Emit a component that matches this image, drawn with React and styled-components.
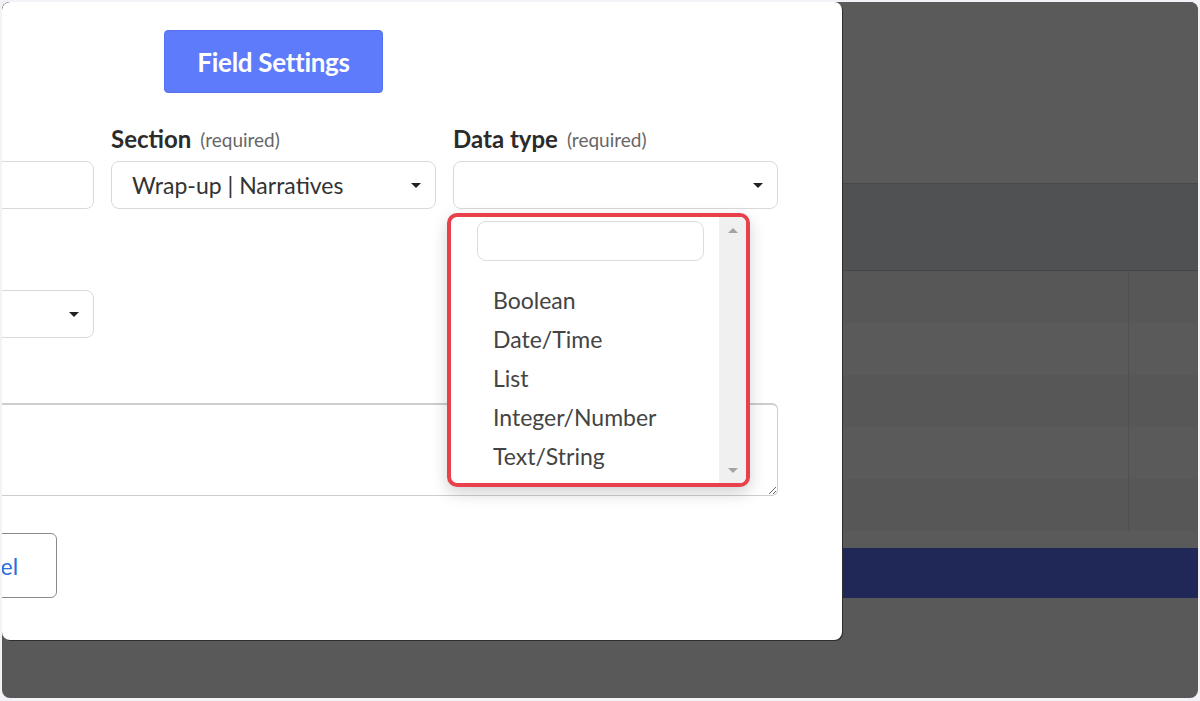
import React from 'react'
import styled, { createGlobalStyle } from 'styled-components'

const GlobalStyle = createGlobalStyle`
  html, body {
    margin: 0;
    padding: 0;
    background: #f2f2f7;
    font-family: Lato, "Open Sans", sans-serif;
  }
  #root {
    padding: 2px 2px 3px 2px;
  }
`

const Frame = styled.div`
  position: relative;
  height: 696px;
  border-radius: 8px;
  overflow: hidden;
  background: #595959;
`

const AppTop = styled.div`
  height: 181px;
  background: #5a5a5a;
`

const Toolbar = styled.div`
  height: 86px;
  background: #505152;
  border-top: 1px solid #474848;
  border-bottom: 1px solid #464646;
`

const Table = styled.div`
  display: flex;
  flex-direction: column;
`

const TableRow = styled.div`
  display: grid;
  grid-template-columns: 1127px 1fr;
  height: 52px;
  background: ${({ odd }) => (odd ? '#5a5a5a' : '#575757')};
`

const Cell = styled.div`
  border-right: ${({ ruled }) => (ruled ? '1px solid #505050' : 'none')};
`

const Spacer = styled.div`
  height: 17px;
  background: #5a5a5a;
`

const NavBar = styled.div`
  height: 50px;
  background: #202857;
`

const Modal = styled.div`
  position: absolute;
  left: 0;
  top: 0;
  width: 840px;
  height: 638px;
  background: #fff;
  border-radius: 8px;
  box-shadow: 1px 1px 0 #2e2e2e;
  overflow: hidden;
`

const Form = styled.div`
  width: 1009px;
  margin-left: -233px;
  padding-top: 28px;
`

const Header = styled.div`
  display: flex;
  justify-content: center;
`

const PrimaryButton = styled.button`
  width: 219px;
  height: 63px;
  border: 1px solid #5671f0;
  border-radius: 4px;
  background: #5e7bfb;
  color: #fff;
  font-family: Lato, sans-serif;
  font-weight: 700;
  font-size: 26px;
  letter-spacing: -0.3px;
`

const Row = styled.div`
  display: grid;
  grid-template-columns: repeat(3, 325px);
  column-gap: 17px;
  margin-top: ${({ top }) => top}px;
`

const Field = styled.div`
  position: relative;
  display: flex;
  flex-direction: column;
`

const Label = styled.div`
  height: 35px;
  display: flex;
  align-items: center;
  gap: 9px;
  margin-bottom: 5px;
  color: #2b2b2b;
  font-weight: 700;
  font-size: 24px;
`

const Hint = styled.span`
  color: #666;
  font-weight: 400;
  font-size: 19px;
  margin-top: 2px;
`

const Box = styled.div`
  position: relative;
  height: 46px;
  border: 1px solid #d9d9d9;
  border-radius: 8px;
  display: flex;
  align-items: center;
  padding: 0 20px;
  color: #333;
  font-size: 23px;
`

const Caret = styled.span`
  position: absolute;
  right: 14px;
  top: 50%;
  margin-top: -2px;
  border-left: 5px solid transparent;
  border-right: 5px solid transparent;
  border-top: 5px solid #222;
`

const TextArea = styled.textarea`
  display: block;
  box-sizing: border-box;
  width: 100%;
  height: 93px;
  margin-top: 65px;
  border: 1px solid #cdcdcd;
  border-top-width: 2px;
  border-radius: 6px;
  resize: vertical;
  font-family: Lato, sans-serif;
  outline: none;
`

const Actions = styled.div`
  display: flex;
  gap: 16px;
  margin-top: 37px;
  padding-left: 9px;
`

const ActionButton = styled.button`
  height: 65px;
  padding: 0 38px 0 34px;
  border-radius: 6px;
  font-family: Lato, sans-serif;
  font-size: 23px;
  background: ${({ primary }) => (primary ? '#5e7bfb' : '#fff')};
  color: ${({ primary }) => (primary ? '#fff' : '#2b6fd8')};
  border: 1px solid ${({ primary }) => (primary ? '#5671f0' : '#8a8a8a')};
`

const Dropdown = styled.div`
  position: absolute;
  left: -6px;
  top: calc(100% + 4px);
  width: 295px;
  height: 266px;
  border: 4px solid #e8414c;
  border-radius: 10px;
  background: #fff;
  box-shadow: 0 6px 16px rgba(0, 0, 0, 0.18);
  display: grid;
  grid-template-columns: 1fr 27px;
  overflow: hidden;
  z-index: 2;
`

const ListArea = styled.div`
  padding: 4px 0 0 26px;
`

const Search = styled.div`
  width: 225px;
  height: 38px;
  border: 1px solid #dcdcdc;
  border-radius: 9px;
`

const Options = styled.ul`
  list-style: none;
  margin: 20px 0 0;
  padding: 0 0 0 16px;
`

const Option = styled.li`
  height: 39px;
  line-height: 39px;
  color: #444;
  font-size: 23px;
`

const ScrollTrack = styled.div`
  background: #f0f0f0;
  display: flex;
  flex-direction: column;
  justify-content: space-between;
  align-items: center;
  padding: 11px 0 10px;
`

const Arrow = styled.span`
  border-left: 5px solid transparent;
  border-right: 5px solid transparent;
  ${({ up }) =>
    up ? 'border-bottom: 5px solid #a3a3a3;' : 'border-top: 5px solid #a3a3a3;'}
`

const dataTypes = ['Boolean', 'Date/Time', 'List', 'Integer/Number', 'Text/String']

export default function App() {
  return (
    <>
      <GlobalStyle />
      <Frame>
        <AppTop />
        <Toolbar />
        <Table>
          {[0, 1, 2, 3, 4].map((i) => (
            <TableRow key={i} odd={i % 2 === 1}>
              <Cell ruled />
              <Cell />
            </TableRow>
          ))}
        </Table>
        <Spacer />
        <NavBar />

        <Modal>
          <Form>
            <Header>
              <PrimaryButton>Field Settings</PrimaryButton>
            </Header>
            <Row top={28}>
              <Field>
                <Label>
                  Name <Hint>(required)</Hint>
                </Label>
                <Box />
              </Field>
              <Field>
                <Label>
                  Section <Hint>(required)</Hint>
                </Label>
                <Box>
                  Wrap-up | Narratives
                  <Caret />
                </Box>
              </Field>
              <Field>
                <Label>
                  Data type <Hint>(required)</Hint>
                </Label>
                <Box>
                  <Caret />
                </Box>
                <Dropdown>
                  <ListArea>
                    <Search />
                    <Options>
                      {dataTypes.map((t) => (
                        <Option key={t}>{t}</Option>
                      ))}
                    </Options>
                  </ListArea>
                  <ScrollTrack>
                    <Arrow up />
                    <Arrow />
                  </ScrollTrack>
                </Dropdown>
              </Field>
            </Row>
            <Row top={41}>
              <Field>
                <Label>
                  Visibility <Hint>(optional)</Hint>
                </Label>
                <Box>
                  <Caret />
                </Box>
              </Field>
            </Row>
            <TextArea />
            <Actions>
              <ActionButton primary>Save</ActionButton>
              <ActionButton>Cancel</ActionButton>
            </Actions>
          </Form>
        </Modal>
      </Frame>
    </>
  )
}
